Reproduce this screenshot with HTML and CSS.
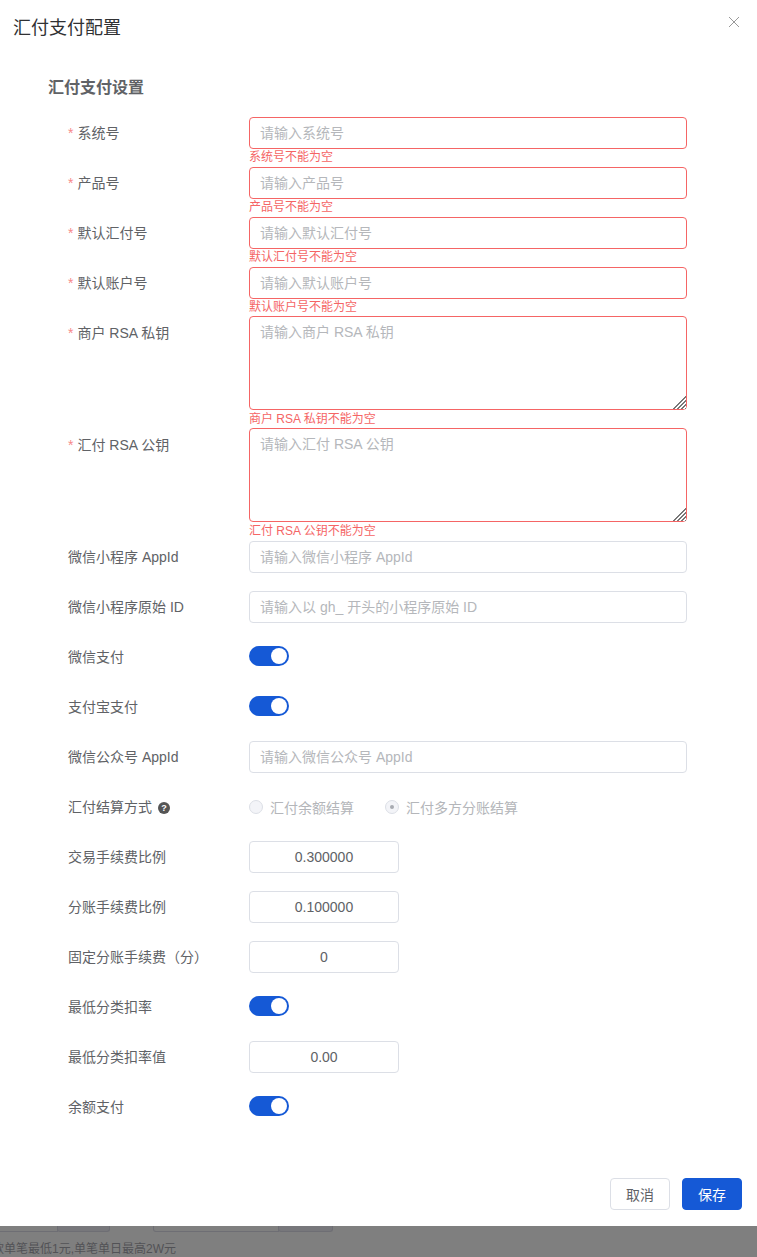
FILE: index.html
```html
<!DOCTYPE html>
<html lang="zh-CN">
  <head>
    <meta charset="utf-8" />
    <title>汇付支付配置</title>
    <link rel="stylesheet" href="styles.css">
  </head>
  <body>
    <div class="modal">
      <div class="modal__header">
        <span class="modal__title">汇付支付配置</span>
        <svg class="modal__close" width="12" height="12" viewBox="0 0 12 12"><path d="M1 1L11 11M11 1L1 11" stroke="#999" stroke-width="1" fill="none"/></svg>
      </div>
      <div class="modal__body">
        <div class="section-title">汇付支付设置</div>

        <div class="row row--error">
          <label class="row__label"><i>*</i>系统号</label>
          <div class="row__control">
            <input class="input input--error" placeholder="请输入系统号">
            <div class="row__tip">系统号不能为空</div>
          </div>
        </div>
        <div class="row row--error">
          <label class="row__label"><i>*</i>产品号</label>
          <div class="row__control">
            <input class="input input--error" placeholder="请输入产品号">
            <div class="row__tip">产品号不能为空</div>
          </div>
        </div>
        <div class="row row--error">
          <label class="row__label"><i>*</i>默认汇付号</label>
          <div class="row__control">
            <input class="input input--error" placeholder="请输入默认汇付号">
            <div class="row__tip">默认汇付号不能为空</div>
          </div>
        </div>
        <div class="row row--error">
          <label class="row__label"><i>*</i>默认账户号</label>
          <div class="row__control">
            <input class="input input--error" placeholder="请输入默认账户号">
            <div class="row__tip">默认账户号不能为空</div>
          </div>
        </div>
        <div class="row row--error row--area">
          <label class="row__label"><i>*</i>商户 RSA 私钥</label>
          <div class="row__control">
            <textarea class="input input--error input--area" placeholder="请输入商户 RSA 私钥"></textarea>
            <div class="row__tip">商户 RSA 私钥不能为空</div>
          </div>
        </div>
        <div class="row row--error row--area">
          <label class="row__label"><i>*</i>汇付 RSA 公钥</label>
          <div class="row__control">
            <textarea class="input input--error input--area" placeholder="请输入汇付 RSA 公钥"></textarea>
            <div class="row__tip">汇付 RSA 公钥不能为空</div>
          </div>
        </div>

        <div class="row">
          <label class="row__label">微信小程序 AppId</label>
          <div class="row__control"><input class="input" placeholder="请输入微信小程序 AppId"></div>
        </div>
        <div class="row">
          <label class="row__label">微信小程序原始 ID</label>
          <div class="row__control"><input class="input" placeholder="请输入以 gh_ 开头的小程序原始 ID"></div>
        </div>
        <div class="row">
          <label class="row__label">微信支付</label>
          <div class="row__control"><span class="switch"></span></div>
        </div>
        <div class="row">
          <label class="row__label">支付宝支付</label>
          <div class="row__control"><span class="switch"></span></div>
        </div>
        <div class="row">
          <label class="row__label">微信公众号 AppId</label>
          <div class="row__control"><input class="input" placeholder="请输入微信公众号 AppId"></div>
        </div>
        <div class="row">
          <label class="row__label">汇付结算方式<span class="help">?</span></label>
          <div class="row__control radios">
            <span class="radio"><span class="radio__dot"></span>汇付余额结算</span>
            <span class="radio radio--on"><span class="radio__dot"></span>汇付多方分账结算</span>
          </div>
        </div>
        <div class="row">
          <label class="row__label">交易手续费比例</label>
          <div class="row__control"><input class="input input--num" value="0.300000"></div>
        </div>
        <div class="row">
          <label class="row__label">分账手续费比例</label>
          <div class="row__control"><input class="input input--num" value="0.100000"></div>
        </div>
        <div class="row">
          <label class="row__label">固定分账手续费（分）</label>
          <div class="row__control"><input class="input input--num" value="0"></div>
        </div>
        <div class="row">
          <label class="row__label">最低分类扣率</label>
          <div class="row__control"><span class="switch"></span></div>
        </div>
        <div class="row">
          <label class="row__label">最低分类扣率值</label>
          <div class="row__control"><input class="input input--num" value="0.00"></div>
        </div>
        <div class="row">
          <label class="row__label">余额支付</label>
          <div class="row__control"><span class="switch"></span></div>
        </div>
      </div>
      <div class="modal__footer">
        <button class="btn">取消</button>
        <button class="btn btn--primary">保存</button>
      </div>
    </div>

    <div class="behind">
      <div class="behind__fields">
        <span class="behind__box behind__box--a"></span>
        <span class="behind__box behind__box--b"></span>
        <span class="behind__box behind__box--c"></span>
        <span class="behind__box behind__box--d"></span>
      </div>
      <div class="behind__note">款单笔最低1元,单笔单日最高2W元</div>
    </div>
  </body>
</html>
```

FILE: styles.css
```css
* {
	box-sizing: border-box;
}

html, body {
	margin: 0;
	height: 100%;
	overflow: hidden;
}

body {
	background: #7f7f7f;
	color: #606266;
	font-family: "Liberation Sans", "Noto Sans CJK SC", sans-serif;
	font-size: 14px;
}

.modal {
	height: 1226px;
	background: #fff;
	display: flex;
	flex-direction: column;
}

.modal__header {
	display: flex;
	justify-content: space-between;
	padding: 16px 17px 0 13px;
	height: 64px;
}

.modal__title {
	font-size: 18px;
	line-height: 24px;
	color: #303133;
}

.modal__body {
	padding: 0 70px 0 48px;
}

.section-title {
	font-size: 16px;
	font-weight: bold;
	line-height: 22px;
	margin-top: 13px;
	margin-bottom: 18px;
	color: #606266;
}

.row {
	display: flex;
	padding-bottom: 18px;
}

.row--error {
	padding-bottom: 0;
}

.row--area {
	margin-top: -1px;
}

.row--area .row__label {
	padding-top: 1px;
}

.row__label {
	width: 201px;
	flex: none;
	padding-left: 20px;
	line-height: 32px;
	color: #606266;
}

.row__label i {
	font-style: normal;
	color: #f78989;
	margin-right: 4px;
}

.row__control {
	flex: 1;
	min-height: 32px;
	display: flex;
	flex-direction: column;
	align-items: flex-start;
	justify-content: center;
}

.row__tip {
	height: 18px;
	font-size: 12px;
	line-height: 16px;
	color: #f56565;
}

.input {
	display: block;
	width: 100%;
	height: 32px;
	padding: 0 10px;
	border: 1px solid #dcdfe6;
	border-radius: 4px;
	background: #fff;
	color: #606266;
	font-family: inherit;
	font-size: 14px;
	outline: none;
}

.input::placeholder {
	color: #b5b7bb;
}

.input--error {
	border-color: #f56565;
}

.input--area {
	height: 94px;
	margin-bottom: 1px;
	padding: 5px 10px;
	line-height: 20px;
}

.input--area::-webkit-resizer {
	background:
		linear-gradient(135deg, #fff 50%, transparent 50%),
		repeating-linear-gradient(135deg, #777 0 1.5px, #fff 1.5px 2.83px);
}

.input--num {
	width: 150px;
	text-align: center;
}

.switch {
	display: flex;
	justify-content: flex-end;
	align-items: center;
	width: 40px;
	height: 20px;
	margin-bottom: 2px;
	padding-right: 2px;
	border-radius: 10px;
	background: #1559d6;
}

.switch::after {
	content: "";
	width: 16px;
	height: 16px;
	border-radius: 50%;
	background: #fff;
}

.help {
	display: inline-block;
	width: 12px;
	height: 12px;
	margin-left: 6px;
	border-radius: 50%;
	background: #555;
	color: #fff;
	font-size: 9px;
	font-weight: bold;
	line-height: 12px;
	text-align: center;
	vertical-align: 1px;
}

.radios {
	flex-direction: row;
	justify-content: flex-start;
	align-items: center;
	gap: 31px;
	padding-bottom: 1px;
}

.radio {
	display: flex;
	align-items: center;
	gap: 7px;
	color: #b4b6ba;
}

.radio__dot {
	display: flex;
	align-items: center;
	justify-content: center;
	width: 14px;
	height: 14px;
	border: 1px solid #dcdfe6;
	border-radius: 50%;
	background: #f3f4f8;
}

.radio--on .radio__dot::after {
	content: "";
	width: 4px;
	height: 4px;
	border-radius: 50%;
	background: #a8abb2;
}

.modal__footer {
	margin-top: auto;
	display: flex;
	justify-content: flex-end;
	gap: 12px;
	padding: 0 15px 16px 0;
}

.btn {
	width: 60px;
	height: 32px;
	border: 1px solid #dcdfe6;
	border-radius: 4px;
	background: #fff;
	color: #606266;
	font-family: inherit;
	font-size: 14px;
	padding: 0;
}

.btn--primary {
	background: #1559d6;
	border-color: #1559d6;
	color: #fff;
}

.behind {
	color: #525256;
}

.behind__fields {
	display: flex;
	height: 6px;
}

.behind__box {
	display: block;
	height: 6px;
	border: 1px solid #6e6e74;
	border-top: 0;
}

.behind__box--a {
	width: 58px;
	border-left: 0;
}

.behind__box--b {
	width: 53px;
	margin-left: -1px;
	background: #77777b;
	border-radius: 0 0 3px 3px;
}

.behind__box--c {
	width: 126px;
	margin-left: 43px;
	border-radius: 0 0 0 3px;
}

.behind__box--d {
	width: 55px;
	margin-left: -1px;
	background: #77777b;
	border-radius: 0 0 3px 3px;
}

.behind__note {
	margin-top: 8px;
	margin-left: -8px;
	font-size: 12px;
	line-height: 18px;
	white-space: nowrap;
}
```
